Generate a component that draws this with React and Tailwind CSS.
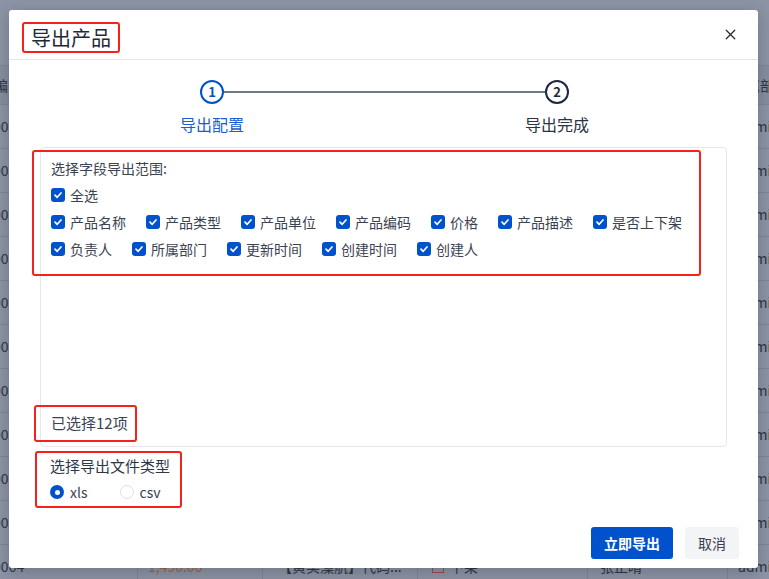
import React from "react";
import { X } from "lucide-react";

const rows = [
  "CP0000014",
  "CP0000013",
  "CP0000012",
  "CP0000011",
  "CP0000010",
  "CP0000009",
  "CP0000008",
  "CP0000007",
  "CP0000006",
  "CP0000005",
  "CP0000004",
];

const fieldRows = [
  ["产品名称", "产品类型", "产品单位", "产品编码", "价格", "产品描述", "是否上下架"],
  ["负责人", "所属部门", "更新时间", "创建时间", "创建人"],
];

const Checkbox = () => (
  <span className="w-[14px] h-[14px] rounded-[3px] bg-[#0052cc] flex items-center justify-center shrink-0">
    <svg width="10" height="10" viewBox="0 0 10 10" fill="none">
      <path d="M2 5.2 L4.2 7.3 L8 3" stroke="white" strokeWidth="1.7" strokeLinecap="round" strokeLinejoin="round" />
    </svg>
  </span>
);

const CheckItem = ({ label }) => (
  <label className="flex items-center gap-[5px] h-[22px] text-[14px] text-[#3b4352]">
    <Checkbox />
    <span>{label}</span>
  </label>
);

const Radio = ({ checked, label }) => (
  <label className="flex items-center gap-[6px] h-[22px] text-[14px] text-[#3b4352]">
    {checked ? (
      <span className="w-[14px] h-[14px] rounded-full bg-[#0052cc] flex items-center justify-center">
        <span className="w-[5px] h-[5px] rounded-full bg-white" />
      </span>
    ) : (
      <span className="w-[14px] h-[14px] rounded-full border-[1.5px] border-[#dcdfe4] bg-white" />
    )}
    <span>{label}</span>
  </label>
);

// the page behind the dimmed overlay; only the edges and the last row show
const BackgroundTable = () => (
  <div className="absolute inset-0 bg-[#8b93a4] text-[14px] text-[#2f3747] overflow-hidden">
    <div className="h-[65px]" />
    <div className="flex h-[40px] border-t border-b border-[#7d8598] bg-[#858d9e] items-center">
      <div className="w-[138px] shrink-0 overflow-hidden">
        <span className="block -ml-[6px]">编号</span>
      </div>
      <div className="flex-1" />
      <div className="w-[41px] pl-[4px] whitespace-nowrap overflow-hidden">所属部门</div>
    </div>
    {rows.map((id, i) => {
      const last = i === rows.length - 1;
      return (
        <div key={id} className="flex h-[44px] border-b border-[#7d8598] items-center">
          <div className="w-[138px] h-full flex items-center border-r border-[#7d8598] shrink-0 overflow-hidden">
            <span className="-ml-[48px] whitespace-nowrap">{id}</span>
          </div>
          <div className="w-[125px] h-full flex items-center border-r border-[#7d8598] pl-[10px] text-[#a4643a] shrink-0">
            {last ? "1,490.00" : ""}
          </div>
          <div className="w-[155px] h-full flex items-center border-r border-[#7d8598] pl-[15px] shrink-0">
            {last ? "【黄实藻航】代码..." : ""}
          </div>
          <div className="w-[170px] h-full flex items-center border-r border-[#7d8598] pl-[14px] gap-[6px] shrink-0">
            {last && <span className="w-[12px] h-[12px] border border-[#9a4b4b]" />}
            {last && <span>下架</span>}
          </div>
          <div className="w-[140px] h-full flex items-center border-r border-[#7d8598] pl-[12px] shrink-0">
            {last ? "张正晴" : ""}
          </div>
          <div className="pl-[10px] whitespace-nowrap">admin</div>
        </div>
      );
    })}
  </div>
);

export default function App() {
  return (
    <div className="relative w-[769px] h-[579px] overflow-hidden font-['Noto_Sans_CJK_SC','Noto_Sans',sans-serif]">
      <BackgroundTable />

      <div className="absolute left-[9px] top-[10px] w-[749px] h-[558px] bg-white rounded-[3px] shadow-[0_4px_16px_rgba(0,0,0,0.2)] flex flex-col">
        {/* header */}
        <div className="h-[50px] border-b border-[#e5e7eb] flex items-center justify-between pl-[13px] pr-[19px] shrink-0">
          <div className="mt-[6px] h-[31px] px-[7px] border-[2.5px] border-[#f5211c] rounded-[3px] flex items-center text-[20px] text-[#1f2937] leading-none">
            导出产品
          </div>
          <X size={17} strokeWidth={1.8} className="text-[#1f2937]" />
        </div>

        {/* stepper */}
        <div className="pt-[20px] ml-[143px] w-[465px] shrink-0">
          <div className="flex items-center">
            <div className="w-[48px]" />
            <div className="w-[24px] h-[24px] rounded-full border-2 border-[#0052cc] flex items-center justify-center text-[13px] font-bold text-[#0052cc]">
              1
            </div>
            <div className="flex-1 h-[2px] bg-[#6e7787]" />
            <div className="w-[24px] h-[24px] rounded-full border-2 border-[#1c2740] flex items-center justify-center text-[13px] font-bold text-[#1c2740]">
              2
            </div>
            <div className="w-[48px]" />
          </div>
          <div className="flex justify-between mt-[8px]">
            <div className="w-[120px] h-[24px] text-center text-[16px] text-[#1a5fcf]">导出配置</div>
            <div className="w-[120px] h-[24px] text-center text-[16px] text-[#2b3442]">导出完成</div>
          </div>
        </div>

        {/* fields */}
        <div className="mt-[11px] mx-[31px] h-[300px] border border-[#e5e7eb] rounded-[4px] flex flex-col shrink-0">
          <div className="mt-[2px] -ml-[9px] w-[669px] border-[2.5px] border-[#f5211c] rounded-[3px] pt-[5px] pb-[14px] pl-[17px] flex flex-col gap-[5px]">
            <div className="h-[22px] text-[14px] text-[#3b4352] flex items-center">选择字段导出范围:</div>
            <div className="flex">
              <CheckItem label="全选" />
            </div>
            {fieldRows.map((row, i) => (
              <div key={i} className="flex gap-x-[20px]">
                {row.map((f) => (
                  <CheckItem key={f} label={f} />
                ))}
              </div>
            ))}
          </div>
          <div className="mt-auto mb-[4px] -ml-[7px] w-[103px] h-[37px] border-[2.5px] border-[#f5211c] rounded-[3px] pl-[15px] flex items-center text-[15px] text-[#3b4352]">
            已选择12项
          </div>
        </div>

        {/* file type */}
        <div className="mt-[4px] ml-[26px] w-[147px] h-[57px] border-[2.5px] border-[#f5211c] rounded-[3px] pl-[13px] pt-[2px] flex flex-col gap-[4px] shrink-0">
          <div className="h-[22px] text-[15px] text-[#2f3747] flex items-center">选择导出文件类型</div>
          <div className="flex gap-[32px]">
            <Radio checked label="xls" />
            <Radio label="csv" />
          </div>
        </div>

        {/* footer */}
        <div className="mt-[19px] flex justify-end gap-[12px] pr-[19px]">
          <button className="w-[82px] h-[32px] rounded-[3px] bg-[#0052cc] text-white text-[14px] font-bold">
            立即导出
          </button>
          <button className="w-[54px] h-[32px] rounded-[3px] bg-[#f3f4f6] text-[#374151] text-[14px]">
            取消
          </button>
        </div>
      </div>
    </div>
  );
}
